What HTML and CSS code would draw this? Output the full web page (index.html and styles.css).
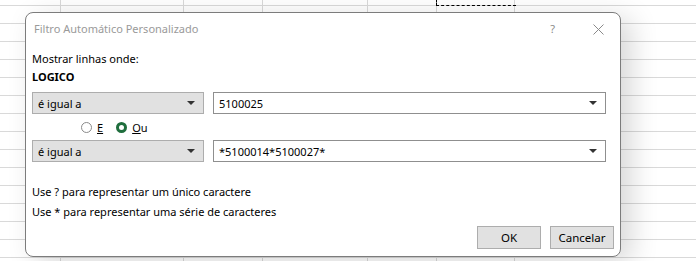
FILE: index.html
```html
<!DOCTYPE html>
<html lang="pt">
<head>
  <meta charset="UTF-8">
  <title>Filtro Automático Personalizado</title>
  <link rel="stylesheet" href="styles.css">
</head>
<body>
  <!-- Spreadsheet behind the dialog -->
  <div class="sheet">
    <div class="col" style="width:60px"></div>
    <div class="col" style="width:122px"></div>
    <div class="col" style="width:78px"></div>
    <div class="col" style="width:104px"></div>
    <div class="col" style="width:68px"></div>
    <div class="col" style="width:77px"></div>
    <div class="marquee"></div>
  </div>

  <!-- Dialog -->
  <div class="dialog">
    <div class="titlebar">
      <span class="title">Filtro Automático Personalizado</span>
      <span class="help">?</span>
      <svg class="close" width="11" height="11" viewBox="0 0 11 11">
        <path d="M0.5 0.5 L10.5 10.5 M10.5 0.5 L0.5 10.5" stroke="#8a8a8a" stroke-width="1" fill="none"/>
      </svg>
    </div>

    <div class="body">
      <div class="line">Mostrar linhas onde:</div>
      <div class="line bold">LOGICO</div>

      <div class="criteria first">
        <div class="select">
          <span>é igual a</span>
          <span class="arrow"></span>
        </div>
        <div class="combo">
          <span>5100025</span>
          <span class="arrow"></span>
        </div>
      </div>

      <div class="radios">
        <label class="radio"><span class="dot"></span><u>E</u></label>
        <label class="radio"><span class="dot checked"></span><span><u>O</u>u</span></label>
      </div>

      <div class="criteria">
        <div class="select">
          <span>é igual a</span>
          <span class="arrow"></span>
        </div>
        <div class="combo">
          <span>*5100014*5100027*</span>
          <span class="arrow"></span>
        </div>
      </div>

      <div class="hints">
        <div class="hint">Use ? para representar um único caractere</div>
        <div class="hint">Use * para representar uma série de caracteres</div>
      </div>

      <div class="buttons">
        <button class="btn">OK</button>
        <button class="btn">Cancelar</button>
      </div>
    </div>
  </div>
</body>
</html>
```

FILE: styles.css
```css
/* General */
body {
  margin: 0;
  width: 696px;
  height: 261px;
  overflow: hidden;
  font-family: 'Noto Sans', 'Open Sans', sans-serif;
  font-size: 11px;
  color: #000;
  background: #fff;
}

/* Sheet grid */
.sheet {
  display: flex;
  height: 261px;
  background: repeating-linear-gradient(to bottom, transparent 0, transparent 5px, #d9d9d9 5px, #d9d9d9 6px, transparent 6px, transparent 18px);
  position: relative;
}

.col {
  flex: none;
  border-right: 1px solid #d9d9d9;
}

.marquee {
  position: absolute;
  left: 436px;
  top: -4px;
  width: 79px;
  height: 9px;
  border-left: 1px dashed #000;
  border-bottom: 1px dashed #000;
}

/* Dialog */
.dialog {
  position: absolute;
  left: 25px;
  top: 12px;
  width: 594px;
  height: 243px;
  background: #fff;
  border: 1px solid #7c7c7c;
  border-radius: 8px;
  box-shadow: 10px 6px 28px rgba(0, 0, 0, 0.16);
  display: flex;
  flex-direction: column;
}

.titlebar {
  display: flex;
  align-items: center;
  height: 31px;
  padding: 0 16px 0 8px;
}

.title {
  flex: 1;
  color: #9a9a9a;
}

.help {
  color: #8a8a8a;
  margin-right: 38px;
}

.close {
  margin-top: 1px;
}

.body {
  flex: 1;
  display: flex;
  flex-direction: column;
  padding: 6px 6px 7px 6px;
}

.line {
  line-height: 18px;
}

.bold {
  font-weight: bold;
}

.criteria {
  display: flex;
  gap: 9px;
}

.criteria.first {
  margin-top: 6px;
}

.select, .combo {
  display: flex;
  align-items: center;
  justify-content: space-between;
  height: 20px;
  padding: 0 8px 0 5px;
}

.select {
  width: 157px;
  background: #e1e1e1;
  border: 1px solid #adadad;
}

.combo {
  flex: 1;
  margin-right: 8px;
  background: #fff;
  border: 1px solid #8f8f8f;
}

.arrow {
  width: 0;
  height: 0;
  border-left: 4px solid transparent;
  border-right: 4px solid transparent;
  border-top: 4px solid #333;
}

.radios {
  display: flex;
  align-items: center;
  height: 26px;
  padding-left: 49px;
  gap: 13px;
}

.radio {
  display: flex;
  align-items: center;
  gap: 5px;
}

.dot {
  width: 11px;
  height: 11px;
  box-sizing: border-box;
  border: 1px solid #8a8a8a;
  border-radius: 50%;
}

.dot.checked {
  border: 3.5px solid #1f6e3d;
}

.hints {
  margin-top: 20px;
}

.hint {
  line-height: 20px;
}

.buttons {
  margin-top: auto;
  display: flex;
  justify-content: flex-end;
  gap: 9px;
}

.btn {
  width: 64px;
  height: 23px;
  padding: 0;
  font-family: inherit;
  font-size: 11.5px;
  color: #000;
  background: #e1e1e1;
  border: 1px solid #adadad;
}
```
